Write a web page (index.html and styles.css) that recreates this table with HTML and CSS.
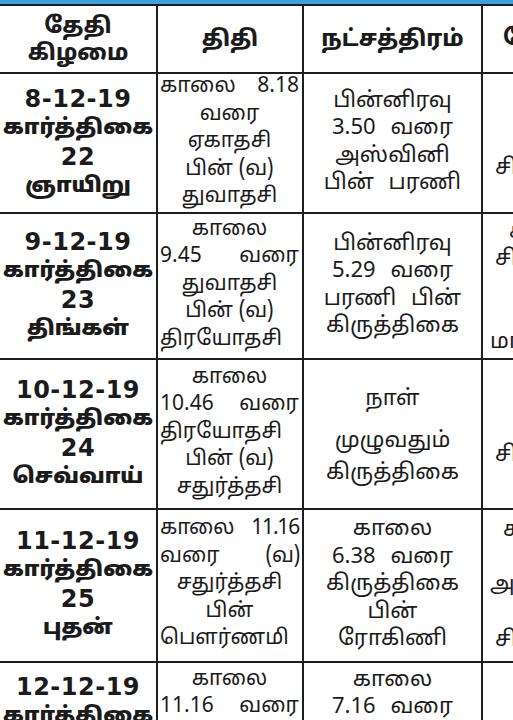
FILE: index.html
```html
<!DOCTYPE html>
<html lang="ta">
<head>
<meta charset="utf-8">
<title>பஞ்சாங்கம்</title>
<link rel="stylesheet" href="styles.css">
</head>
<body>
<div class="strip"></div>
<table class="pan">
  <colgroup>
    <col class="c1"><col class="c2"><col class="c3"><col class="c4">
  </colgroup>
  <thead>
    <tr class="rh">
      <th><span class="ln">தேதி</span><span class="ln">கிழமை</span></th>
      <th>திதி</th>
      <th>நட்சத்திரம்</th>
      <th class="yoga"><span class="ln i2">யோகம்</span></th>
    </tr>
  </thead>
  <tbody>
    <tr class="r1">
      <td class="date"><span class="ln num">8-12-19</span><span class="ln">கார்த்திகை</span><span class="ln num">22</span><span class="ln">ஞாயிறு</span></td>
      <td class="tithi"><span class="ln j">காலை 8.18</span><span class="ln">வரை</span><span class="ln">ஏகாதசி</span><span class="ln">பின் (வ)</span><span class="ln">துவாதசி</span></td>
      <td class="star"><span class="ln">பின்னிரவு</span><span class="ln">3.50 வரை</span><span class="ln">அஸ்வினி</span><span class="ln">பின் பரணி</span></td>
      <td class="yoga y1"><span class="ln i0">சித்தயோகம்</span></td>
    </tr>
    <tr class="r2">
      <td class="date"><span class="ln num">9-12-19</span><span class="ln">கார்த்திகை</span><span class="ln num">23</span><span class="ln">திங்கள்</span></td>
      <td class="tithi"><span class="ln">காலை</span><span class="ln j">9.45 வரை</span><span class="ln">துவாதசி</span><span class="ln">பின் (வ)</span><span class="ln j">திரயோதசி</span></td>
      <td class="star"><span class="ln">பின்னிரவு</span><span class="ln">5.29 வரை</span><span class="ln">பரணி பின்</span><span class="ln">கிருத்திகை</span></td>
      <td class="yoga y2"><span class="ln i3">காலை</span><span class="ln i0">சித்தயோகம்</span><span class="ln ix">பின்</span><span class="ln ix">மாலை</span><span class="ln i1">மரணயோகம்</span></td>
    </tr>
    <tr class="r3">
      <td class="date"><span class="ln num">10-12-19</span><span class="ln">கார்த்திகை</span><span class="ln num">24</span><span class="ln">செவ்வாய்</span></td>
      <td class="tithi"><span class="ln">காலை</span><span class="ln j">10.46 வரை</span><span class="ln j">திரயோதசி</span><span class="ln">பின் (வ)</span><span class="ln">சதுர்த்தசி</span></td>
      <td class="star wide"><span class="ln first">நாள்</span><span class="ln">முழுவதும்</span><span class="ln">கிருத்திகை</span></td>
      <td class="yoga y3"><span class="ln i0">சித்தயோகம்</span></td>
    </tr>
    <tr class="r4">
      <td class="date"><span class="ln num">11-12-19</span><span class="ln">கார்த்திகை</span><span class="ln num">25</span><span class="ln">புதன்</span></td>
      <td class="tithi"><span class="ln j cond">காலை 11.16</span><span class="ln wsp">வரை (வ)</span><span class="ln">சதுர்த்தசி</span><span class="ln">பின்</span><span class="ln j">பௌர்ணமி</span></td>
      <td class="star"><span class="ln">காலை</span><span class="ln">6.38 வரை</span><span class="ln">கிருத்திகை</span><span class="ln">பின்</span><span class="ln">ரோகிணி</span></td>
      <td class="yoga y4"><span class="ln i2">காலை</span><span class="ln ix">வரை</span><span class="ln i1">அமிர்தயோகம்</span><span class="ln ix">பின்</span><span class="ln i0">சித்தயோகம்</span></td>
    </tr>
    <tr class="r5">
      <td class="date top"><span class="ln num">12-12-19</span><span class="ln">கார்த்திகை</span><span class="ln num">26</span><span class="ln">வியாழன்</span></td>
      <td class="tithi top"><span class="ln">காலை</span><span class="ln j">11.16 வரை</span><span class="ln">பௌர்ணமி</span></td>
      <td class="star top"><span class="ln">காலை</span><span class="ln">7.16 வரை</span><span class="ln">ரோகிணி</span></td>
      <td class="yoga y5"><span class="ln ix">சித்தயோகம்</span></td>
    </tr>
  </tbody>
</table>
</body>
</html>
```

FILE: styles.css
```css
html, body {
  margin: 0;
  padding: 0;
  background: #ffffff;
  overflow: hidden;
}

body {
  width: 513px;
  height: 720px;
  font-family: "Noto Sans Tamil", "Lohit Tamil", "Noto Sans", sans-serif;
  color: #1b1b1b;
}

.strip {
  height: 4px;
  background: #3f9fdf;
}

.pan {
  border-collapse: collapse;
  table-layout: fixed;
  width: 610px;
  margin-left: -2px;
}

.c1 { width: 158px; }
.c2 { width: 146px; }
.c3 { width: 179px; }
.c4 { width: 127px; }

.pan th,
.pan td {
  border: 2px solid #1e1e1e;
  padding: 0 3px;
  text-align: center;
  vertical-align: middle;
  overflow: hidden;
}

.ln { display: block; white-space: nowrap; }

.pan th {
  font-size: 22.5px;
  font-weight: 800;
  line-height: 27px;
  padding-top: 3px;
}

.rh { height: 68px; }
.r1 { height: 138px; }
.r2 { height: 146px; }
.r3 { height: 150px; }
.r4 { height: 153px; }
.r5 { height: 120px; }

.pan .date {
  font-weight: 900;
  font-size: 21.5px;
  line-height: 29px;
  padding: 0;
}

.date .num {
  font-family: "DejaVu Sans", sans-serif;
  font-weight: 700;
  font-size: 24px;
  letter-spacing: 0.5px;
}

.tithi,
.star,
.yoga {
  font-size: 22px;
  line-height: 27.5px;
}

.pan .tithi { padding: 0 3px 0 2px; font-size: 21px; }

.j { text-align: justify; text-align-last: justify; }

.cond { letter-spacing: -1.2px; }

.wsp { word-spacing: 40px; }

.star { word-spacing: 9px; }

.pan .star.wide { line-height: 32px; padding-top: 6px; }

.star.wide .first { margin-bottom: 10px; }

.pan .yoga {
  text-align: left;
  vertical-align: top;
  padding: 0;
}

.pan th.yoga { vertical-align: middle; }

.pan .y1 { padding-top: 81px; }
.pan .y2 { padding-top: 5px; }
.pan .y3 { padding-top: 82px; }
.pan .y4 { padding-top: 7px; }
.pan .y5 { padding-top: 7px; }

.i0 { padding-left: 12px; }
.i1 { padding-left: 7px; }
.i2 { padding-left: 20px; }
.i3 { padding-left: 26px; }
.ix { padding-left: 60px; }

.pan .top { vertical-align: top; }
.pan .date.top { padding-top: 10px; }
.pan .tithi.top,
.pan .star.top { padding-top: 4px; }
```
